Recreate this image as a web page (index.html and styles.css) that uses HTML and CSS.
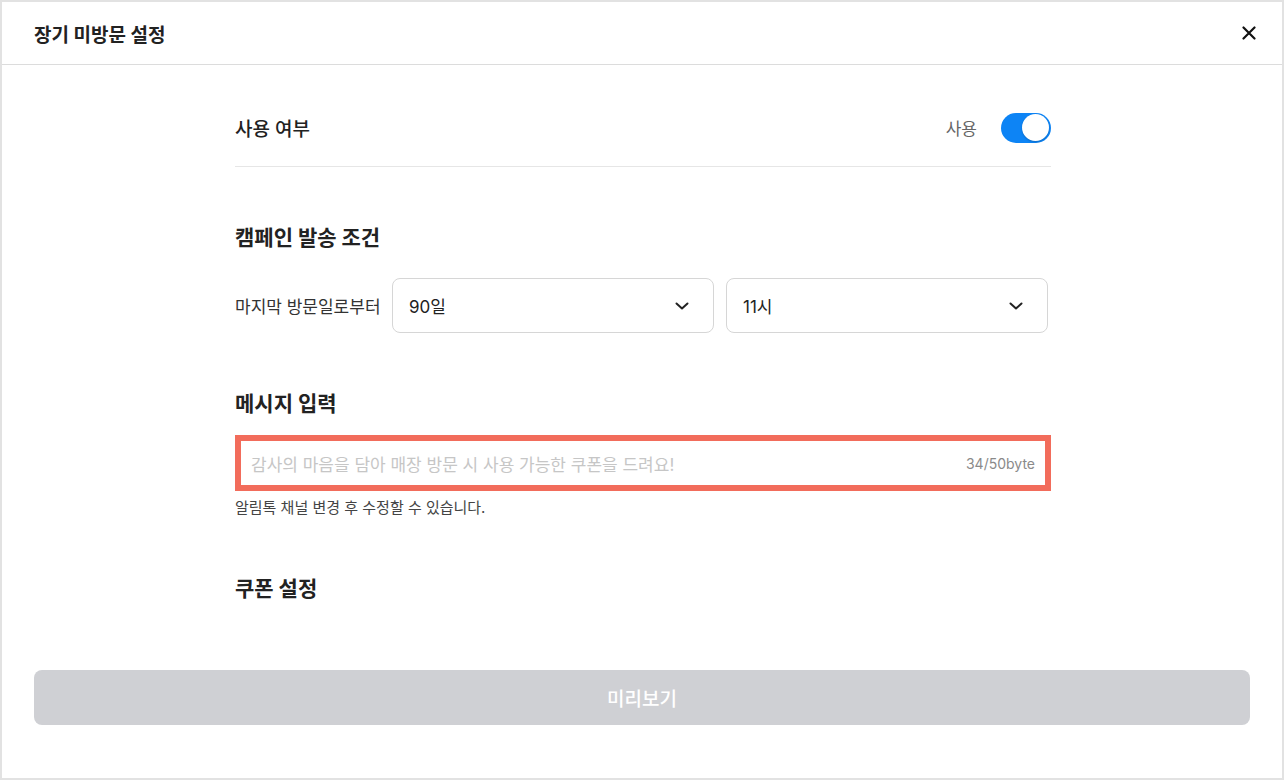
FILE: index.html
```html
<!DOCTYPE html>
<html lang="ko">
<head>
<meta charset="utf-8">
<title>장기 미방문 설정</title>
<link rel="stylesheet" href="styles.css">
</head>
<body>
<div class="modal">
  <header class="modal-header">
    <h1 class="modal-title">장기 미방문 설정</h1>
    <button class="close-btn" aria-label="닫기">
      <svg width="14" height="14" viewBox="0 0 14 14"><path d="M1.5 1.5L12.5 12.5M12.5 1.5L1.5 12.5" stroke="#111" stroke-width="2.2" stroke-linecap="round"/></svg>
    </button>
  </header>
  <main class="modal-body">
    <div class="content">
      <div class="use-row">
        <span class="use-label">사용 여부</span>
        <div class="use-control">
          <span class="use-text">사용</span>
          <span class="toggle"><span class="knob"></span></span>
        </div>
      </div>

      <h2 class="section-title first">캠페인 발송 조건</h2>
      <div class="cond-row">
        <span class="cond-label">마지막 방문일로부터</span>
        <div class="select">
          <span>90일</span>
          <svg class="chev" width="14" height="8" viewBox="0 0 14 8"><path d="M1.5 1.5L7 6.5L12.5 1.5" fill="none" stroke="#222" stroke-width="2" stroke-linecap="round" stroke-linejoin="round"/></svg>
        </div>
        <div class="select">
          <span>11시</span>
          <svg class="chev" width="14" height="8" viewBox="0 0 14 8"><path d="M1.5 1.5L7 6.5L12.5 1.5" fill="none" stroke="#222" stroke-width="2" stroke-linecap="round" stroke-linejoin="round"/></svg>
        </div>
      </div>

      <h2 class="section-title">메시지 입력</h2>
      <div class="msg-box">
        <span class="placeholder">감사의 마음을 담아 매장 방문 시 사용 가능한 쿠폰을 드려요!</span>
        <span class="counter">34/50byte</span>
      </div>
      <p class="helper">알림톡 채널 변경 후 수정할 수 있습니다.</p>

      <h2 class="section-title">쿠폰 설정</h2>
    </div>
  </main>
  <footer class="modal-footer">
    <button class="preview-btn">미리보기</button>
  </footer>
</div>
</body>
</html>
```

FILE: styles.css
```css
* { box-sizing: border-box; }
html, body { margin: 0; padding: 0; }
body {
  font-family: Inter, "Noto Sans CJK KR", "Noto Sans", sans-serif;
  color: #222;
  background: #fff;
}
.modal {
  width: 1284px;
  height: 780px;
  border: 2px solid #e2e2e2;
  background: #fff;
  display: flex;
  flex-direction: column;
}
.modal-header {
  height: 63px;
  flex: none;
  border-bottom: 1px solid #dcdcdc;
  display: flex;
  align-items: center;
  justify-content: space-between;
  padding: 0 26px 0 32px;
}
.modal-title {
  margin: 0;
  font-size: 19px;
  font-weight: 700;
  color: #222;
}
.close-btn {
  border: 0;
  background: none;
  padding: 0;
  width: 14px;
  height: 14px;
  display: flex;
  cursor: pointer;
}
.modal-body { flex: 1; }
.content {
  width: 816px;
  margin-left: 233px;
  padding-top: 24px;
}
.use-row {
  height: 78px;
  border-bottom: 1px solid #e6e6e6;
  display: flex;
  align-items: center;
  justify-content: space-between;
}
.use-label {
  font-size: 19px;
  font-weight: 500;
  color: #222;
}
.use-control { display: flex; align-items: center; gap: 24px; }
.use-text { font-size: 17px; color: #666; }
.toggle {
  width: 50px;
  height: 30px;
  border-radius: 15px;
  background: #0d84f5;
  display: flex;
  align-items: center;
  justify-content: flex-end;
  padding-right: 2px;
}
.knob {
  width: 27px;
  height: 27px;
  border-radius: 50%;
  background: #fff;
  box-shadow: 0 1px 2px rgba(0,0,0,0.2);
}
.section-title {
  margin: 57px 0 0;
  font-size: 21px;
  line-height: 28px;
  font-weight: 700;
  color: #222;
}
.cond-row {
  margin-top: 26px;
  display: flex;
  align-items: center;
}
.cond-label {
  font-size: 17px;
  color: #333;
  width: 157px;
}
.select {
  width: 322px;
  height: 55px;
  border: 1px solid #d6d6d6;
  border-radius: 8px;
  display: flex;
  align-items: center;
  justify-content: space-between;
  padding: 0 24px 0 16px;
  font-size: 17px;
  color: #222;
}
.select + .select { margin-left: 12px; }
.chev { display: block; }
.msg-box {
  margin-top: 17px;
  height: 56px;
  border: 6px solid #f26c5b;
  display: flex;
  align-items: center;
  justify-content: space-between;
  padding: 0 10px 0 10px;
}
.placeholder { font-size: 17px; color: #c6c6c6; }
.counter { font-size: 14px; color: #8a8a8a; }
.helper {
  margin: 7px 0 0;
  font-size: 15px;
  line-height: 20px;
  color: #444;
}
.modal-footer {
  flex: none;
  padding: 0 32px 53px;
}
.preview-btn {
  width: 100%;
  height: 55px;
  border: 0;
  border-radius: 8px;
  background: #cfd0d4;
  color: #fff;
  font-family: inherit;
  font-size: 19px;
  font-weight: 500;
}
```
